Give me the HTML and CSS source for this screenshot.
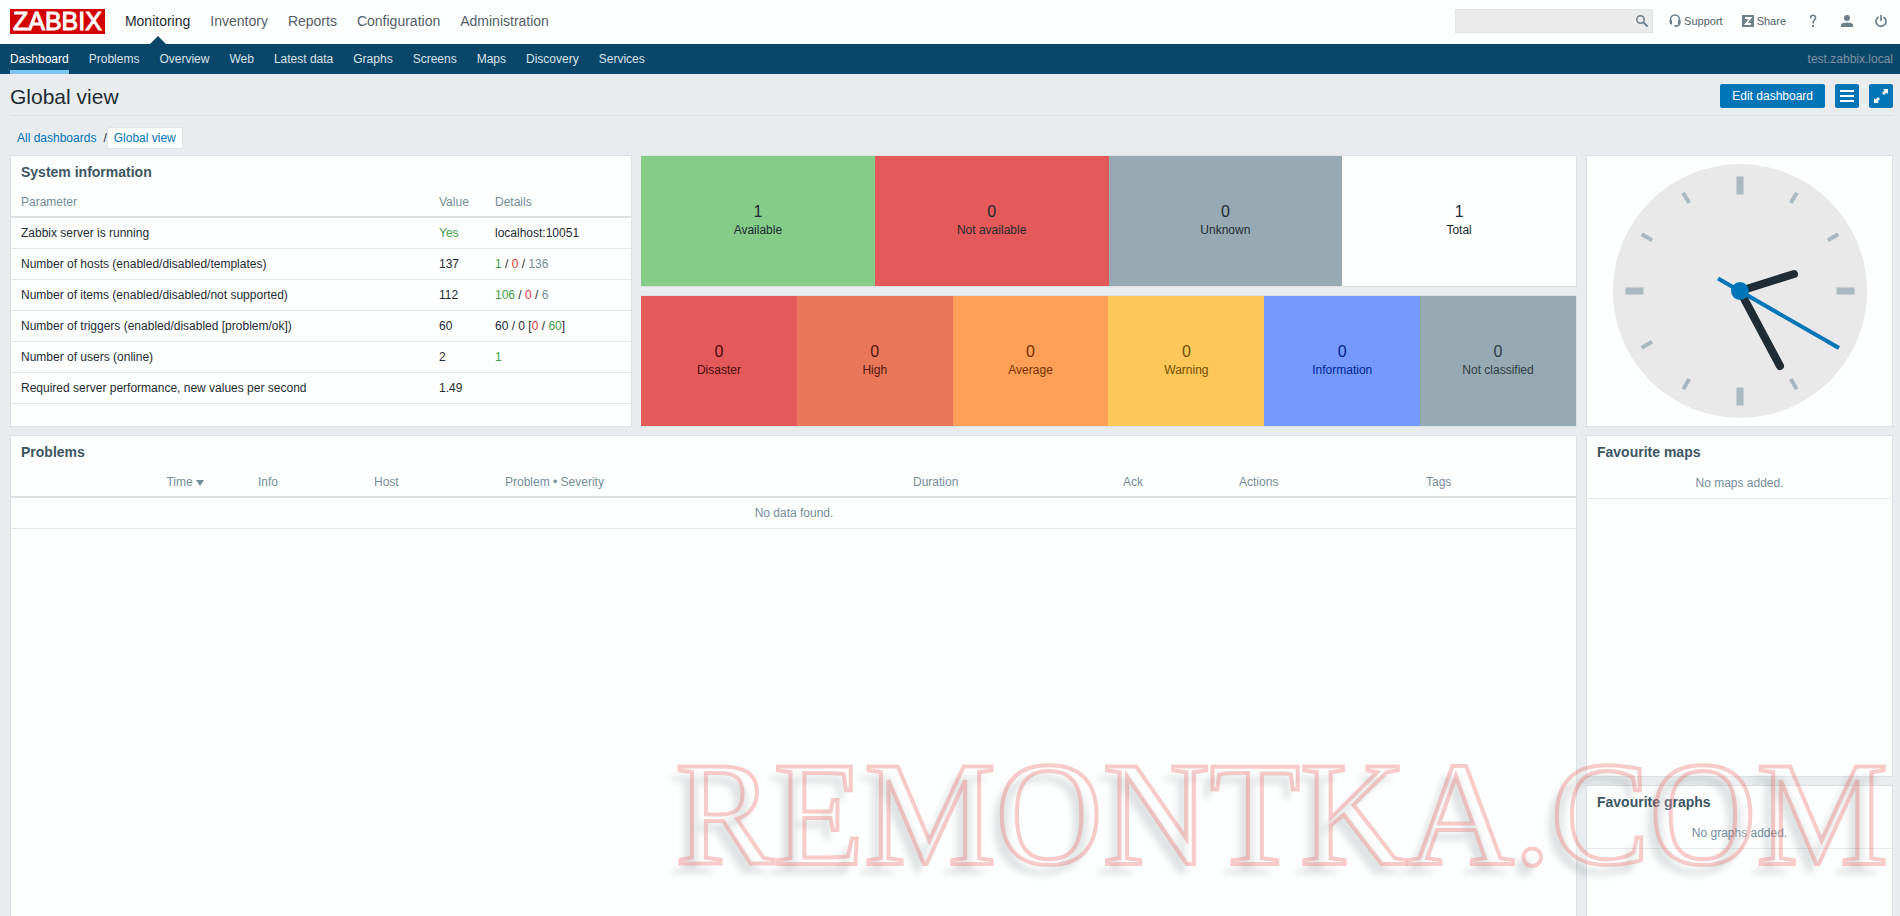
FILE: index.html
```html
<!DOCTYPE html>
<html lang="en">
<head>
<meta charset="utf-8">
<title>Dashboard</title>
<link rel="stylesheet" href="styles.css">
</head>
<body>
<div class="shell">
  <header class="topbar">
    <a class="logo" href="#">ZABBIX</a>
    <nav class="main-menu" aria-label="Main">
      <a class="selected" href="#">Monitoring</a>
      <a href="#">Inventory</a>
      <a href="#">Reports</a>
      <a href="#">Configuration</a>
      <a href="#">Administration</a>
    </nav>
    <form class="search" role="search">
      <input type="text" aria-label="Search">
      <button type="button" aria-label="Search">
        <svg width="14" height="14" viewBox="0 0 14 14"><circle cx="5.5" cy="5.5" r="3.700" fill="none" stroke="#6d7f8b" stroke-width="1.500"/><path d="M8.200 8.200L12.500 12.500" stroke="#6d7f8b" stroke-width="1.900"/></svg>
      </button>
    </form>
    <nav class="user-menu" aria-label="User">
      <a class="support" href="#"><svg width="12" height="14" viewBox="0 0 12 14"><path d="M1.500 8V5.500a4.500 4.500 0 0 1 9 0V9q0 3-3.500 3" fill="none" stroke="#6d7f8b" stroke-width="1.500"/><path d="M1 6h2v4.500H1.800L.5 9zM9 6h2.500v4L9 10.500zM5.500 11h2v2h-2z" fill="#6d7f8b"/></svg>Support</a>
      <a class="share" href="#"><svg width="12" height="12" viewBox="0 0 12 12"><path d="M0 0h12v12H0z" fill="#6d7f8b"/><path d="M3 3h5.500L3.800 9H9" fill="none" stroke="#fff" stroke-width="1.800"/></svg>Share</a>
      <a class="help" href="#" aria-label="Help"><svg width="8" height="14" viewBox="0 0 8 14"><path d="M1.500 4.500C1.500 0 6.800.5 6.500 4 6.300 6 4 6.300 4 9.500" fill="none" stroke="#6d7f8b" stroke-width="1.700"/><path d="M3 11h2v2H3z" fill="#6d7f8b"/></svg></a>
      <a class="profile" href="#" aria-label="Profile"><svg width="12" height="12" viewBox="0 0 12 12"><circle cx="6" cy="3" r="3" fill="#6d7f8b"/><path d="M0 12v-2q0-2.500 6-2.500T12 10v2z" fill="#6d7f8b"/></svg></a>
      <a href="#" aria-label="Sign out"><svg width="12" height="14" viewBox="0 0 12 14"><path d="M3.500 3a5 5 0 1 0 5 0M6 1v6" fill="none" stroke="#6d7f8b" stroke-width="1.700"/></svg></a>
    </nav>
  </header>

  <div class="subbar">
    <nav class="sub-menu" aria-label="Monitoring">
      <a class="selected" href="#">Dashboard</a>
      <a href="#">Problems</a>
      <a href="#">Overview</a>
      <a href="#">Web</a>
      <a href="#">Latest data</a>
      <a href="#">Graphs</a>
      <a href="#">Screens</a>
      <a href="#">Maps</a>
      <a href="#">Discovery</a>
      <a href="#">Services</a>
    </nav>
    <span class="server-name">test.zabbix.local</span>
  </div>

  <main class="content">
    <div class="title-row">
      <h1>Global view</h1>
      <button class="btn" type="button">Edit dashboard</button>
      <button class="btn btn-icon" type="button" aria-label="Actions"><svg width="14" height="14" viewBox="0 0 14 14"><path d="M0 2h14M0 7h14M0 12h14" stroke="#fff" stroke-width="2"/></svg></button>
      <button class="btn btn-icon" type="button" aria-label="Fullscreen"><svg width="14" height="14" viewBox="0 0 14 14"><path d="M9 0h5v5l-1.500-1.500L10 6 8 4l2.500-2.500zM5 14H0V9l1.500 1.500L4 8l2 2-2.500 2.500z" fill="#fff"/></svg></button>
    </div>
    <nav class="breadcrumbs" aria-label="Breadcrumbs">
      <a href="#">All dashboards</a><span class="slash">/</span><a class="current" href="#">Global view</a>
    </nav>

    <div class="dashboard">
      <section class="widget sysinfo">
        <h2>System information</h2>
        <table class="list">
          <colgroup><col class="c-param"><col class="c-value"><col class="c-details"></colgroup>
          <thead><tr><th>Parameter</th><th>Value</th><th>Details</th></tr></thead>
          <tbody>
            <tr><td>Zabbix server is running</td><td><span class="green">Yes</span></td><td>localhost:10051</td></tr>
            <tr><td>Number of hosts (enabled/disabled/templates)</td><td>137</td><td><span class="green">1</span> / <span class="red">0</span> / <span class="grey">136</span></td></tr>
            <tr><td>Number of items (enabled/disabled/not supported)</td><td>112</td><td><span class="green">106</span> / <span class="red">0</span> / <span class="grey">6</span></td></tr>
            <tr><td>Number of triggers (enabled/disabled [problem/ok])</td><td>60</td><td>60 / 0 [<span class="red">0</span> / <span class="green">60</span>]</td></tr>
            <tr><td>Number of users (online)</td><td>2</td><td><span class="green">1</span></td></tr>
            <tr><td>Required server performance, new values per second</td><td>1.49</td><td></td></tr>
          </tbody>
        </table>
      </section>

      <div class="totals">
        <section class="tiles" aria-label="Host availability">
          <div class="tile available"><span class="count">1</span>Available</div>
          <div class="tile unavailable"><span class="count">0</span>Not available</div>
          <div class="tile unknown"><span class="count">0</span>Unknown</div>
          <div class="tile total"><span class="count">1</span>Total</div>
        </section>
        <section class="tiles" aria-label="Problems by severity">
          <div class="tile disaster"><span class="count">0</span>Disaster</div>
          <div class="tile high"><span class="count">0</span>High</div>
          <div class="tile average"><span class="count">0</span>Average</div>
          <div class="tile warning"><span class="count">0</span>Warning</div>
          <div class="tile information"><span class="count">0</span>Information</div>
          <div class="tile unclassified"><span class="count">0</span>Not classified</div>
        </section>
      </div>

      <section class="widget clock" aria-label="Clock">
        <svg width="254" height="254" viewBox="-127 -127 254 254">
          <circle r="127" fill="#e9e9e9"/>
          <g stroke="#aab8c0" stroke-width="7">
            <path d="M0-114.500v18M0 96.500v18M-114.500 0h18M96.500 0h18"/>
          </g>
          <g stroke="#aab8c0" stroke-width="4">
            <path d="M0-113.500v12" transform="rotate(30)"/>
            <path d="M0-113.500v12" transform="rotate(60)"/>
            <path d="M0-113.500v12" transform="rotate(120)"/>
            <path d="M0-113.500v12" transform="rotate(150)"/>
            <path d="M0-113.500v12" transform="rotate(210)"/>
            <path d="M0-113.500v12" transform="rotate(240)"/>
            <path d="M0-113.500v12" transform="rotate(300)"/>
            <path d="M0-113.500v12" transform="rotate(330)"/>
          </g>
          <path d="M0 0L54-17M0 0L40 75" stroke="#1f2c33" stroke-width="8" stroke-linecap="round"/>
          <path d="M-22-12.500L99 57" stroke="#0275b8" stroke-width="4"/>
          <circle r="9" fill="#0275b8"/>
        </svg>
      </section>

      <section class="widget problems">
        <h2>Problems</h2>
        <table class="list">
          <colgroup><col class="p-time"><col class="p-line"><col class="p-info"><col class="p-host"><col class="p-problem"><col class="p-duration"><col class="p-ack"><col class="p-actions"><col class="p-tags"></colgroup>
          <thead><tr><th class="time">Time <span class="arrow-down"></span></th><th></th><th>Info</th><th>Host</th><th>Problem • Severity</th><th>Duration</th><th>Ack</th><th>Actions</th><th>Tags</th></tr></thead>
          <tbody><tr><td class="nothing" colspan="9">No data found.</td></tr></tbody>
        </table>
      </section>

      <div class="favourites">
        <section class="widget maps">
          <h2>Favourite maps</h2>
          <p class="nothing">No maps added.</p>
        </section>
        <section class="widget graphs">
          <h2>Favourite graphs</h2>
          <p class="nothing">No graphs added.</p>
        </section>
      </div>
    </div>
  </main>
  <div class="watermark">REMONTKA.COM</div>
</div>
</body>
</html>
```
FILE: styles.css
```css
* { box-sizing: border-box; }

body {
  margin: 0;
  background: #e9ecee;
  color: #1f2c33;
  font: 12px/16px "Liberation Sans", Arial, sans-serif;
}

a { color: #0275b8; text-decoration: none; }
h1, h2, p { margin: 0; }
svg { display: block; }

.shell {
  position: relative;
  display: flex;
  flex-direction: column;
  min-height: 100vh;
  overflow: hidden;
}

/* Top bar */
.topbar {
  display: flex;
  align-items: center;
  height: 44px;
  padding: 0 13px 2px 10px;
  background: #fdfefe;
}
.logo {
  padding: 0 3px;
  background: #d40000;
  color: #fff;
  font-size: 25px;
  line-height: 25px;
  -webkit-text-stroke: 1px;
}
.main-menu {
  display: flex;
  gap: 20px;
  margin: 0 auto 0 20px;
  font-size: 14px;
}
.main-menu a { position: relative; color: #555f66; line-height: 42px; }
.main-menu .selected { color: #1f2c33; }
.main-menu .selected::after {
  content: "";
  position: absolute;
  bottom: -2px;
  left: 50%;
  margin-left: -8px;
  border: 8px solid transparent;
  border-top: 0;
  border-bottom-color: #0a4669;
}
.search { position: relative; width: 198px; margin-right: 16px; }
.search input {
  display: block;
  width: 100%;
  height: 24px;
  padding: 0 28px 0 6px;
  border: 1px solid #dfe4e7;
  background: #ebebeb;
}
.search button {
  position: absolute;
  top: 5px;
  right: 4px;
  padding: 0;
  border: 0;
  background: none;
}
.user-menu { display: flex; align-items: center; font-size: 11px; }
.user-menu a { display: flex; align-items: center; gap: 3px; color: #4f5f6a; }
.support { margin-right: 19px; }
.share { margin-right: 23px; }
.help { margin-right: 24px; }
.profile { margin-right: 22px; }

/* Section bar */
.subbar {
  display: flex;
  justify-content: space-between;
  height: 30px;
  padding: 0 7px 0 10px;
  background: #0a4669;
  line-height: 30px;
}
.sub-menu { display: flex; gap: 20px; }
.sub-menu a { color: #d8e3ea; }
.sub-menu .selected { border-bottom: 4px solid #7dc6f2; color: #fff; -webkit-text-stroke: 0; }
.server-name { color: #7b93a2; }

/* Page head */
.content {
  display: flex;
  flex: 1;
  flex-direction: column;
  padding: 0 7px 0 10px;
}
.title-row {
  display: flex;
  align-items: center;
  gap: 10px;
  height: 42px;
  padding-top: 3px;
  border-bottom: 1px solid #dce1e4;
}
h1 { margin-right: auto; padding-top: 2px; font-size: 21px; font-weight: normal; line-height: 24px; }
.btn {
  height: 24px;
  padding: 0 12px;
  border: 0;
  border-radius: 2px;
  background: #0275b8;
  color: #fff;
  font: 12px/24px "Liberation Sans", Arial, sans-serif;
}
.btn-icon { width: 24px; padding: 0 5px; }
.breadcrumbs { display: flex; align-items: center; height: 39px; padding: 5px 0 0 7px; }
.slash { margin-left: 7px; }
.breadcrumbs .current {
  padding: 2px 6px;
  border: 1px solid #dfe4e7;
  border-radius: 2px;
  background: #fdfefe;
}

/* Dashboard grid */
.dashboard {
  display: grid;
  flex: 1;
  grid-template-columns: 621fr 936fr 307fr;
  grid-template-rows: 272px 1fr;
  gap: 8px 9px;
}
.widget { border: 1px solid #dce1e4; background: #fdfefe; }
.widget h2 {
  padding: 8px 10px 0;
  color: #3c5563;
  font-size: 14px;
  line-height: 16px;
}
.problems { grid-column: 1 / 3; border-bottom: 0; }
.list { width: 100%; margin-top: 5px; border-collapse: collapse; table-layout: fixed; }
.list th {
  height: 32px;
  padding: 2px 10px 0;
  border-bottom: 2px solid #dce1e4;
  color: #768d99;
  font-weight: normal;
  text-align: left;
}
.list td { height: 31px; padding: 0 10px; border-bottom: 1px solid #e6eaec; }
.c-param { width: 418px; }
.c-value { width: 56px; }
.c-details { width: 146px; }
.p-time { width: 203px; }
.p-line { width: 34px; }
.p-info { width: 116px; }
.p-host { width: 131px; }
.p-problem { width: 408px; }
.p-duration { width: 210px; }
.p-ack { width: 116px; }
.p-actions { width: 187px; }
.p-tags { width: 161px; }
.list .time { text-align: right; }
.arrow-down {
  display: inline-block;
  border: 4px solid transparent;
  border-top: 6px solid #768d99;
  border-bottom: 0;
}
.green { color: #429e47; }
.red { color: #e33734; }
.grey { color: #768d99; }
.list .nothing, .nothing { color: #768d99; text-align: center; }
p.nothing { padding: 15px 0 7px; border-bottom: 1px solid #e6eaec; }

/* Total tiles */
.totals { display: grid; grid-template-rows: 1fr 1fr; gap: 8px; }
.tiles { display: flex; border: 1px solid #dce1e4; border-left: 0; }
.tile {
  display: flex;
  flex: 1;
  flex-direction: column;
  align-items: center;
  justify-content: center;
  padding-bottom: 2px;
}
.count { font-size: 16px; line-height: 20px; }
.available { background: #86cc89; }
.unavailable { background: #e45959; }
.unknown { background: #97aab3; }
.total { background: #fdfefe; }
.disaster { background: #e45959; color: #4b0c0c; }
.high { background: #e97659; color: #52190b; }
.average { background: #ffa059; color: #733100; }
.warning { background: #fdc859; color: #734d00; }
.information { background: #7499ff; color: #00268e; }
.unclassified { background: #97aab3; color: #2e3b42; }

.clock { display: flex; align-items: center; justify-content: center; }
.favourites { display: grid; grid-template-rows: 342px 1fr; gap: 8px; }
.graphs { border-bottom: 0; }

/* Lettering laid over the page */
.watermark {
  position: absolute;
  right: 12px;
  bottom: 22px;
  color: rgba(255, 255, 255, 0.2);
  font: 148px/160px "Liberation Serif", "Times New Roman", serif;
  -webkit-text-stroke: 4px rgba(238, 110, 110, 0.35);
  text-shadow: -8px 10px 6px rgba(70, 90, 85, 0.16);
  pointer-events: none;
}
```
